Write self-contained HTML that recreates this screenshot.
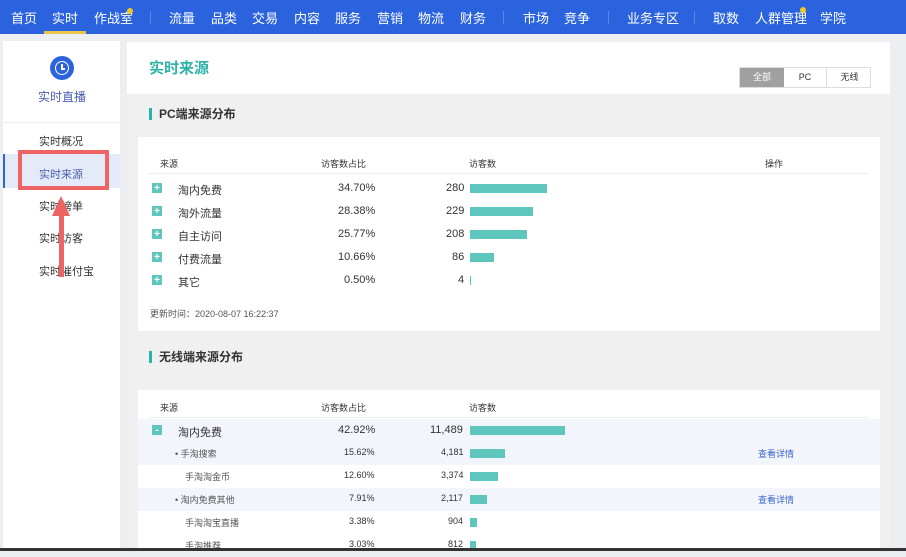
<!DOCTYPE html><html><head><meta charset="utf-8"><style>
*{margin:0;padding:0;box-sizing:border-box}
body{width:906px;height:551px;overflow:hidden;background:#eceef1;font-family:"Liberation Sans","Noto Sans CJK SC",sans-serif;position:relative;font-size:11px;color:#333}
.nav{position:absolute;left:0;top:0;width:906px;height:34px;background:#2b63df;color:#fff;font-size:13px}
.nav span{position:absolute;top:8px}
.sep{position:absolute;top:11px;width:1px;height:13px;background:#5a86e8}
.dot{position:absolute;width:6px;height:6px;border-radius:3px;background:#f3c623}
.side{position:absolute;left:3px;top:41px;width:117px;height:510px;background:#fff}
.side .it{position:absolute;left:36px;font-size:11px;color:#333}
.main{position:absolute;left:127px;top:42px;width:763px;height:509px;background:#f0f0f0}
.hdr{position:absolute;left:0;top:0;width:763px;height:52px;background:#fff}
.card{position:absolute;left:11px;width:742px;background:#fff}
.stitle{position:absolute;left:22px;font-size:12px;font-weight:bold;color:#333;padding-left:7px;border-left:3px solid #27b5a8;line-height:12px}
.row{position:absolute;left:0;width:742px;height:23px;font-size:11px}
.row span{position:absolute;top:5px}
.bar{position:absolute;top:7px;height:9px;background:#5ec6bc}
.plus{position:absolute;left:14px;top:6px;width:10px;height:10px;background:#5ec6bc;color:#fff;font-size:10px;line-height:9px;text-align:center;font-weight:bold;padding-top:1px}
.th{position:absolute;font-size:9px;color:#333}
</style></head><body>
<div class="nav">
<span style="left:11px">首页</span><span style="left:52px">实时</span>
<div style="position:absolute;left:44px;top:31px;width:42px;height:3px;background:#e9c54a"></div>
<span style="left:94px">作战室</span><div class="dot" style="left:127px;top:8px"></div>
<div class="sep" style="left:150px"></div>
<span style="left:169px">流量</span><span style="left:211px">品类</span><span style="left:252px">交易</span><span style="left:294px">内容</span><span style="left:335px">服务</span><span style="left:377px">营销</span><span style="left:418px">物流</span><span style="left:460px">财务</span>
<div class="sep" style="left:503px"></div>
<span style="left:523px">市场</span><span style="left:564px">竞争</span>
<div class="sep" style="left:608px"></div>
<span style="left:627px">业务专区</span>
<div class="sep" style="left:694px"></div>
<span style="left:713px">取数</span><span style="left:755px">人群管理</span><div class="dot" style="left:800px;top:7px"></div><span style="left:820px">学院</span>
</div>
<div class="side">
<div style="position:absolute;left:47px;top:15px;width:24px;height:24px;border-radius:12px;background:#2b63df"><div style="position:absolute;left:5px;top:5px;width:14px;height:14px;border:1.5px solid #fff;border-radius:7px"></div><div style="position:absolute;left:11px;top:8px;width:1.5px;height:5px;background:#fff"></div><div style="position:absolute;left:11px;top:12px;width:4px;height:1.5px;background:#fff"></div></div>
<div style="position:absolute;left:35px;top:47px;font-size:12px;color:#4a5fb0">实时直播</div>
<div style="position:absolute;left:0;top:81px;width:117px;height:1px;background:#eee"></div>
<div class="it" style="top:92px">实时概况</div>
<div style="position:absolute;left:0;top:113px;width:117px;height:34px;background:#e4eaf7;border-left:2px solid #2b63df"></div>
<div style="position:absolute;left:15px;top:109px;width:91px;height:40px;border:4px solid #ee6464"></div>
<div class="it" style="top:125px;color:#4a5fb0">实时来源</div>
<div class="it" style="top:157px">实时榜单</div>
<div class="it" style="top:189px">实时访客</div>
<div class="it" style="top:222px">实时催付宝</div>
<div style="position:absolute;left:56px;top:172px;width:5px;height:64px;background:#ee6464"></div>
<div style="position:absolute;left:49px;top:155px;width:0;height:0;border-left:9px solid transparent;border-right:9px solid transparent;border-bottom:20px solid #ee6464"></div>
</div>
<div class="main">
<div class="hdr">
<div style="position:absolute;left:22px;top:15px;font-size:15px;font-weight:bold;color:#2fb1a7">实时来源</div>
<div style="position:absolute;left:612px;top:25px;width:132px;height:21px;border:1px solid #ddd;font-size:9px">
<div style="position:absolute;left:0;top:0;width:44px;height:19px;background:#a0a0a0;color:#fff;text-align:center;line-height:19px">全部</div>
<div style="position:absolute;left:44px;top:0;width:43px;height:19px;border-right:1px solid #ddd;text-align:center;line-height:19px">PC</div>
<div style="position:absolute;left:88px;top:0;width:43px;height:19px;text-align:center;line-height:19px">无线</div></div>
</div>
<div class="stitle" style="top:66px">PC端来源分布</div>
<div class="card" style="top:95px;height:194px">
<div class="th" style="left:22px;top:20px">来源</div><div class="th" style="left:183px;top:20px">访客数占比</div><div class="th" style="left:331px;top:20px">访客数</div><div class="th" style="left:627px;top:20px">操作</div>
<div style="position:absolute;left:11px;top:36px;width:720px;height:1px;background:#eee"></div>
<div class="row" style="top:40px"><div class="plus">+</div><span style="left:40px">淘内免费</span><span style="left:200px">34.70%</span><span style="left:308px">280</span><div class="bar" style="left:332px;width:77px"></div></div>
<div class="row" style="top:63px"><div class="plus">+</div><span style="left:40px">淘外流量</span><span style="left:200px">28.38%</span><span style="left:308px">229</span><div class="bar" style="left:332px;width:63px"></div></div>
<div class="row" style="top:86px"><div class="plus">+</div><span style="left:40px">自主访问</span><span style="left:200px">25.77%</span><span style="left:308px">208</span><div class="bar" style="left:332px;width:57px"></div></div>
<div class="row" style="top:109px"><div class="plus">+</div><span style="left:40px">付费流量</span><span style="left:200px">10.66%</span><span style="left:314px">86</span><div class="bar" style="left:332px;width:24px"></div></div>
<div class="row" style="top:132px"><div class="plus">+</div><span style="left:40px">其它</span><span style="left:206px">0.50%</span><span style="left:320px">4</span><div class="bar" style="left:332px;width:1px"></div></div>
<div style="position:absolute;left:12px;top:170px;font-size:9px;color:#555">更新时间：2020-08-07 16:22:37</div>
</div>
<div class="stitle" style="top:309px">无线端来源分布</div>
<div class="card" style="top:348px;height:161px">
<div class="th" style="left:22px;top:11px">来源</div><div class="th" style="left:183px;top:11px">访客数占比</div><div class="th" style="left:331px;top:11px">访客数</div>
<div style="position:absolute;left:11px;top:27px;width:720px;height:1px;background:#eee"></div>
<div class="row" style="top:29px;background:#f2f5fb"><div class="plus">-</div><span style="left:40px">淘内免费</span><span style="left:200px">42.92%</span><span style="left:292px">11,489</span><div class="bar" style="left:332px;width:95px"></div></div>
<div class="row" style="top:52px;background:#f2f5fb;font-size:9px"><span style="left:37px;color:#555">• 手淘搜索</span><span style="left:206px">15.62%</span><span style="left:303px">4,181</span><div class="bar" style="left:332px;width:35px"></div><span style="left:620px;color:#3a64c8">查看详情</span></div>
<div class="row" style="top:75px;font-size:9px"><span style="left:47px;color:#555">手淘淘金币</span><span style="left:206px">12.60%</span><span style="left:303px">3,374</span><div class="bar" style="left:332px;width:28px"></div></div>
<div class="row" style="top:98px;background:#f2f5fb;font-size:9px"><span style="left:37px;color:#555">• 淘内免费其他</span><span style="left:211px">7.91%</span><span style="left:303px">2,117</span><div class="bar" style="left:332px;width:17px"></div><span style="left:620px;color:#3a64c8">查看详情</span></div>
<div class="row" style="top:121px;font-size:9px"><span style="left:47px;color:#555">手淘淘宝直播</span><span style="left:211px">3.38%</span><span style="left:310px">904</span><div class="bar" style="left:332px;width:7px"></div></div>
<div class="row" style="top:144px;font-size:9px"><span style="left:47px;color:#555">手淘推荐</span><span style="left:211px">3.03%</span><span style="left:310px">812</span><div class="bar" style="left:332px;width:6px"></div></div>
</div>
</div>
<div style="position:absolute;left:0;top:548px;width:906px;height:3px;background:#333"></div>
</body></html>
